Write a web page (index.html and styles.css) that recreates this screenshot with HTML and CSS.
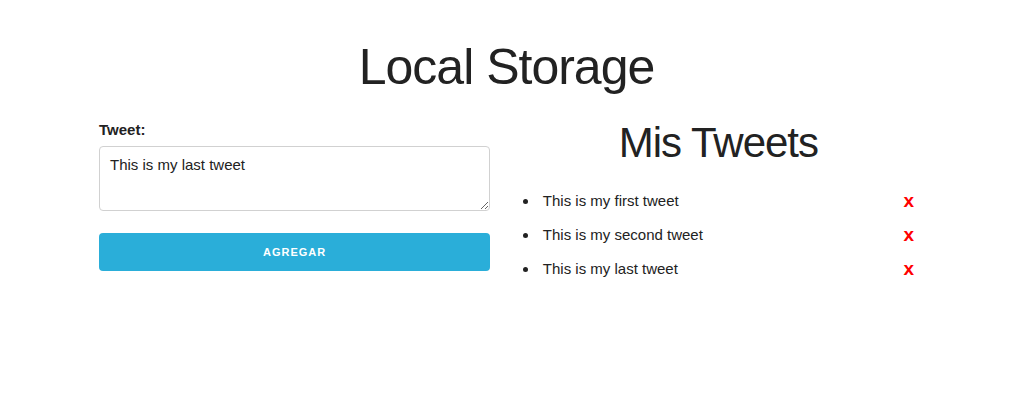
FILE: index.html
```html
<!DOCTYPE html>
<html lang="es">
<head>
<meta charset="utf-8">
<title>Local Storage</title>
<link rel="stylesheet" href="styles.css">
</head>
<body>
<div class="container">
  <h1 class="title">Local Storage</h1>
  <div class="row">
    <form class="column">
      <label class="label" for="tweet">Tweet:</label>
      <textarea id="tweet" class="textarea">This is my last tweet</textarea>
      <button type="button" class="button-primary">Agregar</button>
    </form>
    <div class="column">
      <h2 class="subtitle">Mis Tweets</h2>
      <ul class="tweets">
        <li class="tweet"><span class="tweet-text">This is my first tweet</span><a class="delete" href="#">x</a></li>
        <li class="tweet"><span class="tweet-text">This is my second tweet</span><a class="delete" href="#">x</a></li>
        <li class="tweet"><span class="tweet-text">This is my last tweet</span><a class="delete" href="#">x</a></li>
      </ul>
    </div>
  </div>
</div>
</body>
</html>
```
FILE: styles.css
```css
html, body {
  margin: 0;
  padding: 0;
  background: #fff;
}
body {
  font-family: "Liberation Sans", Arial, Helvetica, sans-serif;
  font-size: 15px;
  line-height: 1.6;
  color: #222;
}
.container {
  width: 855px;
  margin: 0 auto;
  padding: 37px 20px 0;
  box-sizing: border-box;
}
.title {
  margin: 0 0 20px;
  font-size: 50px;
  font-weight: 300;
  line-height: 1.2;
  letter-spacing: -1px;
  text-align: center;
}
.row {
  display: grid;
  grid-template-columns: 1fr 1fr;
  column-gap: 4%;
}
.column {
  display: flex;
  flex-direction: column;
  align-items: stretch;
  margin: 0;
}
.label {
  font-weight: 700;
  margin: 1px 0 4px;
}
.textarea {
  height: 65px;
  box-sizing: border-box;
  padding: 6px 10px;
  border: 1px solid #d1d1d1;
  border-radius: 4px;
  font: inherit;
  color: #222;
  margin: 0 0 22px;
  resize: vertical;
}
.button-primary {
  height: 38px;
  border: 0;
  border-radius: 4px;
  background: #2aaed9;
  color: #fff;
  font-family: inherit;
  font-size: 11px;
  font-weight: 700;
  letter-spacing: 1px;
  text-transform: uppercase;
  padding: 0 30px;
}
.subtitle {
  margin: 0 0 19px;
  font-size: 42px;
  font-weight: 300;
  line-height: 1.25;
  letter-spacing: -1px;
  text-align: center;
}
.tweets {
  list-style: none;
  margin: 0;
  padding: 0;
}
.tweet {
  display: flex;
  align-items: flex-start;
  margin-bottom: 10px;
  line-height: 24px;
}
.tweet::before {
  content: "";
  width: 5px;
  height: 5px;
  border-radius: 50%;
  background: #222;
  margin: 10px 15px 0 0;
  flex: none;
}
.tweet-text {
  flex: 1;
}
.delete {
  color: #ff0000;
  font-weight: 700;
  font-size: 19px;
  line-height: 24px;
  text-decoration: none;
}
```
